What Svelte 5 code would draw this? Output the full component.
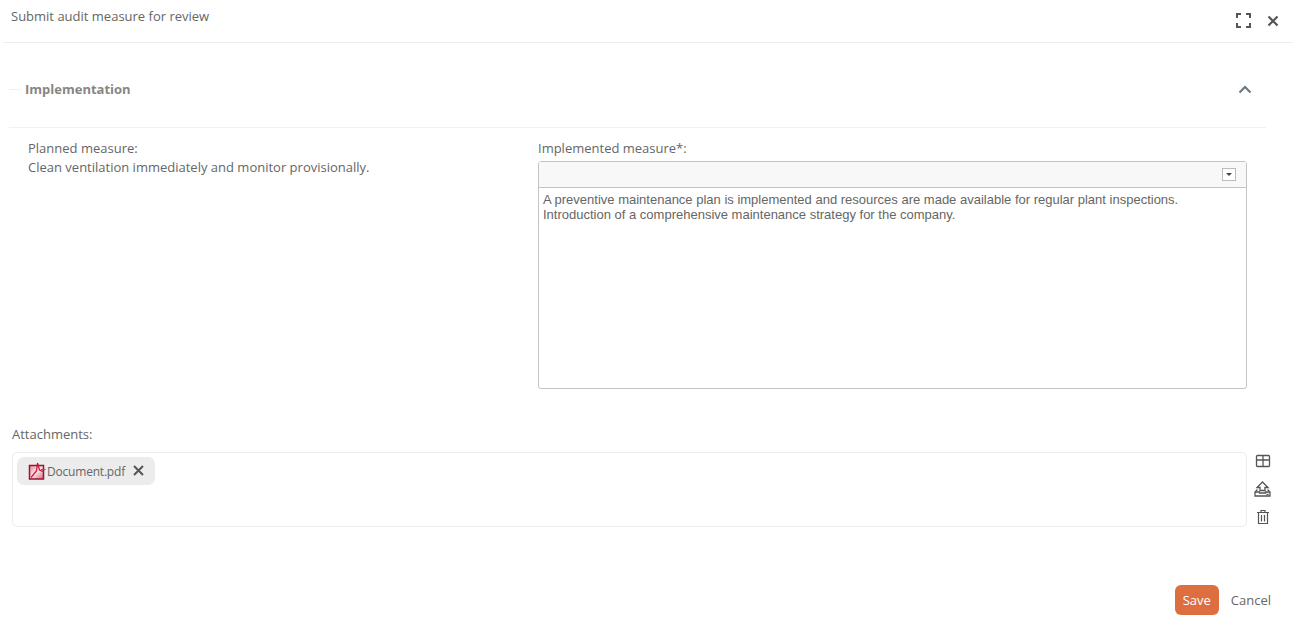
<script>
  let planned = 'Clean ventilation immediately and monitor provisionally.';
</script>

<main class="dialog">
  <header class="titlebar">
    <span class="title">Submit audit measure for review</span>
    <div class="win-actions">
      <svg width="15" height="15" viewBox="0 0 15 15" fill="none" stroke="#555" stroke-width="2">
        <path d="M1 5V1h4M10 1h4v4M14 10v4h-4M5 14H1v-4" />
      </svg>
      <svg width="12" height="12" viewBox="0 0 12 12" fill="none" stroke="#555" stroke-width="2.2">
        <path d="M1.500 1.500l9 9M10.500 1.500l-9 9" />
      </svg>
    </div>
  </header>

  <section class="panel">
    <div class="panel-head">
      <span class="rule"></span>
      <h2>Implementation</h2>
      <svg class="chevron" width="14" height="9" viewBox="0 0 14 9" fill="none" stroke="#66747f" stroke-width="2">
        <path d="M1.500 7.500L7 2l5.500 5.500" />
      </svg>
    </div>
    <div class="panel-body">
      <div class="planned">
        <div>Planned measure:</div>
        <div>{planned}</div>
      </div>
      <div class="implemented">
        <label for="measure">Implemented measure*:</label>
        <div class="editor" id="measure">
          <div class="toolbar">
            <span class="drop"></span>
          </div>
          <div class="content">
            A preventive maintenance plan is implemented and resources are made available for regular plant inspections.<br />
            Introduction of a comprehensive maintenance strategy for the company.
          </div>
        </div>
      </div>
    </div>
  </section>

  <section class="attachments">
    <div class="att-label">Attachments:</div>
    <div class="att-row">
      <div class="att-box">
        <span class="chip">
          <svg class="pdf" width="18" height="18" viewBox="0 0 18 18">
            <defs>
              <linearGradient id="pdf-fill" x1="0" y1="0" x2="1" y2="1">
                <stop offset="0" stop-color="#e98d9e" />
                <stop offset="0.5" stop-color="#f8e3e6" />
                <stop offset="1" stop-color="#d9677d" />
              </linearGradient>
            </defs>
            <rect x="1.500" y="3.500" width="14" height="13.500" fill="url(#pdf-fill)" stroke="#9c1130" stroke-width="1.500" />
            <path d="M3 15.500L8.500 9 9.500 1l2 7 3.500 1.500" fill="none" stroke="#c2183a" stroke-width="1.200" />
            <path d="M13 7.500h4.500" stroke="#666" stroke-width="1" />
          </svg>
          <span class="name">Document.pdf</span>
          <svg class="remove" width="11" height="11" viewBox="0 0 11 11" fill="none" stroke="#555" stroke-width="2">
            <path d="M1 1l9 9M10 1l-9 9" />
          </svg>
        </span>
      </div>
      <div class="att-tools">
        <svg width="16" height="14" viewBox="0 0 16 14" fill="none" stroke="#555" stroke-width="1.300">
          <rect x="1.500" y="1.500" width="13" height="11" rx="1" />
          <path d="M1.500 6h13M8 1.500v11" />
        </svg>
        <svg width="17" height="16" viewBox="0 0 17 16" fill="none" stroke="#555" stroke-width="1.300">
          <path d="M6 9.500V6.500H3L8.500 1l5.500 5.500H11v3z" fill="#fff" />
          <path d="M3.500 8.500L1 11v4h15v-4l-2.500-2.500" />
          <path d="M1 11h4.500v1h6v-1H16" />
          <path d="M12.500 13.500h2" stroke-width="1.500" />
        </svg>
        <svg width="14" height="16" viewBox="0 0 14 16" fill="none" stroke="#555" stroke-width="1.200">
          <path d="M1 3.500h12M5 3.500V1.500h4v2M2.500 3.500v11h9v-11M5.500 6v6.500M8.500 6v6.500" />
        </svg>
      </div>
    </div>
  </section>

  <footer class="actions">
    <button class="save">Save</button>
    <button class="cancel">Cancel</button>
  </footer>
</main>

<style>
  :global(body) {
    background: #fff;
  }

  .dialog {
    width: 1297px;
    height: 623px;
    overflow: hidden;
    font-family: "Open Sans", sans-serif;
    font-size: 13px;
    color: #666;
  }

  .titlebar {
    height: 42px;
    margin: 0 4px 0 3px;
    padding: 0 14px 0 8px;
    border-bottom: 1px solid #ececec;
    display: flex;
    justify-content: space-between;
    align-items: flex-start;
  }

  .title {
    margin-top: 7px;
    line-height: 18px;
  }

  .win-actions {
    display: flex;
    align-items: center;
    gap: 16px;
    margin-top: 13px;
  }

  .panel {
    margin: 0 31px 0 9px;
  }

  .panel-head {
    height: 85px;
    box-sizing: border-box;
    padding: 8px 14px 0 0;
    border-bottom: 1px solid #f1f1f1;
    display: flex;
    align-items: center;
  }

  .rule {
    width: 12px;
    height: 1px;
    background: #f0f0f0;
    margin-right: 4px;
  }

  h2 {
    flex: 1;
    margin: 0;
    font-size: 13px;
    font-weight: 700;
    color: #868683;
  }

  .panel-body {
    display: flex;
    padding: 11px 19px 0 19px;
  }

  .planned {
    width: 510px;
    line-height: 19px;
  }

  .implemented {
    flex: 1;
  }

  label {
    display: block;
    line-height: 19px;
    margin-bottom: 3px;
  }

  .editor {
    height: 226px;
    border: 1px solid #c4c4c4;
    border-radius: 3px;
  }

  .toolbar {
    height: 25px;
    background: #f8f8f8;
    border-bottom: 1px solid #c4c4c4;
    display: flex;
    align-items: center;
    justify-content: flex-end;
    padding-right: 10px;
  }

  .drop {
    width: 14px;
    height: 13px;
    box-sizing: border-box;
    border: 1px solid #bbb;
    background: #fff;
    position: relative;
  }

  .drop::after {
    content: "";
    position: absolute;
    left: 3px;
    top: 4px;
    border-left: 3px solid transparent;
    border-right: 3px solid transparent;
    border-top: 3px solid #444;
  }

  .content {
    padding: 4px;
    font-family: "Liberation Sans", Arial, sans-serif;
    font-size: 13px;
    line-height: 15px;
    color: #666;
  }

  .attachments {
    margin: 0 0 0 12px;
    padding-top: 36px;
  }

  .att-label {
    line-height: 19px;
    margin-bottom: 8px;
  }

  .att-row {
    display: flex;
  }

  .att-box {
    box-sizing: border-box;
    width: 1235px;
    height: 75px;
    border: 1px solid #ececec;
    border-radius: 5px;
    padding: 4px;
  }

  .chip {
    display: inline-flex;
    align-items: center;
    height: 28px;
    padding: 0 11px;
    background: #ececec;
    border-radius: 7px;
  }

  .pdf {
    margin-right: 1px;
    margin-top: -1px;
  }

  .name {
    font-size: 12px;
    letter-spacing: -0.2px;
    margin-right: 8px;
  }

  .remove {
    margin-top: -2px;
  }

  .att-tools {
    display: flex;
    flex-direction: column;
    align-items: center;
    gap: 12.5px;
    margin-left: 7px;
    padding-top: 2px;
  }

  .actions {
    display: flex;
    justify-content: flex-end;
    align-items: center;
    gap: 12px;
    margin-top: 58px;
    padding-right: 26px;
  }

  button {
    font: inherit;
    border: 0;
    background: none;
    color: #666;
    padding: 0;
  }

  .save {
    width: 44px;
    height: 30px;
    background: #dc6e3f;
    color: #fff;
    border-radius: 6px;
  }
</style>
